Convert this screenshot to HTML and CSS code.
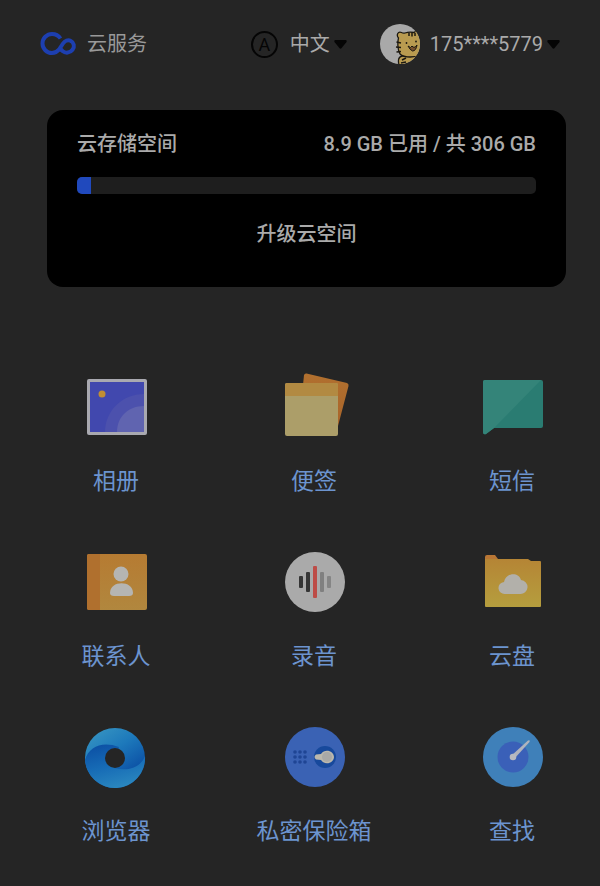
FILE: index.html
```
<!DOCTYPE html>
<html lang="zh-CN">
<head>
    <meta charset="UTF-8">
    <meta name="viewport" content="width=device-width, initial-scale=1.0">
    <title>云服务</title>
    <link rel="stylesheet" href="styles.css">
</head>
<body>
    <header class="header">
        <a href="#" class="brand">
            <svg width="36" height="24" viewBox="0 0 36 24" fill="none" stroke="#1d3fb0" stroke-width="4">
                <path d="M20.500 6.500C18.500 3.500 15.500 2 12 2A9.500 9.500 0 1 0 12 21C15 21 17 20 19 17.500L23 11.500C25 8.500 28 7.500 30.500 8.800C34 10.500 35 14.500 32.500 17.800C30 21.200 25.500 21.500 22.500 19L20 16.500"/>
            </svg>
            <span>云服务</span>
        </a>
        <div class="header-right">
            <button type="button" class="lang-btn">
                <span class="lang-icon">A</span>
                <span class="lang-text">中文</span>
                <svg width="13" height="9" viewBox="0 0 13 9"><path d="M1.500 0H11.500Q13.500 .5 12.300 2.300L7.600 8Q6.500 9.300 5.400 8L.7 2.300Q-.5 .5 1.500 0Z" fill="#050505"/></svg>
            </button>
            <button type="button" class="account-btn">
                <svg width="40" height="40" viewBox="0 0 40 40">
                    <defs><clipPath id="avatarClip"><circle cx="20" cy="20" r="20"/></clipPath></defs>
                    <g clip-path="url(#avatarClip)">
                        <rect width="40" height="40" fill="#a9a9a9"/>
                        <g fill="#b99b50" stroke="#1c1810" stroke-width="1.300" stroke-linejoin="round">
                            <path d="M22 32C18 33 18 37 19 41H37L36 31Z"/>
                            <path d="M18.500 14C16 11 18 7 21.500 8.500C23 9.500 23.500 9.500 25 9C28 8 31 8 34 8.500C36 6 41 7 42 10V30C36 34 24 34 20 30C17.500 26 17.500 18 18.500 14Z"/>
                            <path d="M16.500 18L21 19M16 23L21 23.500M16.500 28L21 27.500M29 9V12M32 8.500V12.500M35 9V12M22 36L26 34M21 39L26 38" fill="none" stroke-width="1.500"/>
                            <path d="M28 22Q31 25 32 22Q34 25 37 21Q36 27 32.500 27Q30 26 28 22Z" fill="#77502d" stroke-width="1"/>
                        </g>
                        <circle cx="26.500" cy="19" r=".9" fill="#1c1810"/>
                        <circle cx="36" cy="17.500" r=".9" fill="#1c1810"/>
                    </g>
                </svg>
                <span class="account-text">175****5779</span>
                <svg width="13" height="9" viewBox="0 0 13 9"><path d="M1.500 0H11.500Q13.500 .5 12.300 2.300L7.600 8Q6.500 9.300 5.400 8L.7 2.300Q-.5 .5 1.500 0Z" fill="#050505"/></svg>
            </button>
        </div>
    </header>

    <main>
        <section class="storage-card">
            <div class="storage-info">
                <span id="storageLabel">云存储空间</span>
                <span>8.9 GB 已用 / 共 306 GB</span>
            </div>
            <div class="storage-bar" role="progressbar" aria-labelledby="storageLabel" aria-valuemin="0" aria-valuemax="306" aria-valuenow="8.9">
                <div class="storage-used" style="width: 3%"></div>
            </div>
            <button type="button" class="upgrade-btn">升级云空间</button>
        </section>

        <nav class="app-grid">
            <a href="#" class="app-item">
                <svg class="app-icon" viewBox="0 0 64 64">
                    <rect x="3" y="4" width="60" height="56" rx="2" fill="#a9a9b0"/>
                    <rect x="6" y="7" width="54" height="50" fill="#4148ae"/>
                    <path d="M21 57C21 36 38 19 60 19V57Z" fill="#4c51ad"/>
                    <path d="M33 57C33 42 44 31 60 31V57Z" fill="#6064b0"/>
                    <circle cx="18" cy="19" r="3.500" fill="#c08e33"/>
                </svg>
                <span>相册</span>
            </a>
            <a href="#" class="app-item">
                <svg class="app-icon" viewBox="0 0 64 64">
                    <defs>
                        <linearGradient id="noteBack" x1="0" y1="0" x2="0" y2="1"><stop offset="0" stop-color="#b1702f"/><stop offset="1" stop-color="#a9652a"/></linearGradient>
                    </defs>
                    <path d="M24.500 -1.500L65 8Q67 9 66.500 11L56 51L18 40L22 0Q23 -2 24.500 -1.500Z" fill="url(#noteBack)"/>
                    <rect x="3" y="8" width="53" height="53" rx="2" fill="#ac9e69"/>
                    <path d="M5 8H54Q56 8 56 10V21H3V10Q3 8 5 8Z" fill="#b28a42"/>
                </svg>
                <span>便签</span>
            </a>
            <a href="#" class="app-item">
                <svg class="app-icon" viewBox="0 0 64 64">
                    <path d="M5 5H61Q63 5 63 7V51Q63 53 61 53H14L6 59Q3 60 3 57V7Q3 5 5 5Z" fill="#2a7c72"/>
                    <path d="M5 5H61L14 53L6 59Q3 60 3 57V7Q3 5 5 5Z" fill="#348479"/>
                </svg>
                <span>短信</span>
            </a>
            <a href="#" class="app-item">
                <svg class="app-icon" viewBox="0 0 64 64">
                    <defs>
                        <linearGradient id="contactBg" x1="0" y1="0" x2="0" y2="1"><stop offset="0" stop-color="#b67b32"/><stop offset="1" stop-color="#b1873e"/></linearGradient>
                    </defs>
                    <rect x="3" y="4" width="60" height="56" rx="2" fill="url(#contactBg)"/>
                    <path d="M5 4H16V60H5Q3 60 3 58V6Q3 4 5 4Z" fill="#b0702e"/>
                    <circle cx="37" cy="24" r="7.500" fill="#b5b5b2"/>
                    <path d="M26 43C26 30 49 30 49 43Q49 46 45 46H30Q26 46 26 43Z" fill="#b5b5b2"/>
                </svg>
                <span>联系人</span>
            </a>
            <a href="#" class="app-item">
                <svg class="app-icon" viewBox="0 0 64 64">
                    <circle cx="33" cy="32" r="30" fill="#aaa"/>
                    <rect x="17" y="26" width="4" height="12" rx="1" fill="#353535"/>
                    <rect x="24" y="22" width="4" height="20" rx="1" fill="#353535"/>
                    <rect x="31" y="16" width="4" height="32" rx="1" fill="#bd4c47"/>
                    <rect x="38" y="22" width="4" height="20" rx="1" fill="#808080"/>
                    <rect x="45" y="26" width="4" height="12" rx="1" fill="#858585"/>
                </svg>
                <span>录音</span>
            </a>
            <a href="#" class="app-item">
                <svg class="app-icon" viewBox="0 0 64 64">
                    <defs>
                        <linearGradient id="folderBg" x1="0" y1="0" x2="0" y2="1"><stop offset="0" stop-color="#b58535"/><stop offset="1" stop-color="#b59e3e"/></linearGradient>
                    </defs>
                    <path d="M7 5H15L18 9H48V20H5V7Q5 5 7 5Z" fill="#b87635"/>
                    <path d="M5 9H48L51 11H60Q61 11 61 12V56Q61 57 60 57H6Q5 57 5 56Z" fill="url(#folderBg)"/>
                    <path d="M25 44A6 6 0 0 1 24 32C26 22 39 22 41 30A7 7 0 0 1 40 44Z" fill="#b2b0aa"/>
                </svg>
                <span>云盘</span>
            </a>
            <a href="#" class="app-item">
                <svg class="app-icon" viewBox="0 0 64 64">
                    <defs>
                        <linearGradient id="ringTop" x1=".15" y1="0" x2=".7" y2=".8"><stop offset="0" stop-color="#3795c2"/><stop offset=".5" stop-color="#1d79bb"/><stop offset="1" stop-color="#0c51a5"/></linearGradient>
                        <linearGradient id="ringBottom" x1=".25" y1="0" x2=".6" y2="1"><stop offset="0" stop-color="#0c51a5"/><stop offset=".5" stop-color="#176cb6"/><stop offset="1" stop-color="#2b88bf"/></linearGradient>
                    </defs>
                    <circle cx="31" cy="33" r="30" fill="url(#ringTop)"/>
                    <path d="M1 35C5 21 19 16 35 22L31 33L30 43C44 47 57 42 61 31A30 30 0 0 1 1 35Z" fill="url(#ringBottom)"/>
                    <circle cx="31" cy="33" r="10" fill="#252525"/>
                </svg>
                <span>浏览器</span>
            </a>
            <a href="#" class="app-item">
                <svg class="app-icon" viewBox="0 0 64 64">
                    <circle cx="33" cy="32" r="30" fill="#3a62b4"/>
                    <circle cx="43" cy="32" r="11" fill="#17499c"/>
                    <path d="M39 29C43 23 52 26 52 32C52 38 43 41 39 35L34 34.500Q31 32 34 29.500Z" fill="#bbb8ad"/>
                    <circle cx="45" cy="32" r="5" fill="#a9a9a7"/>
                    <g fill="#1f4594">
                        <circle cx="13" cy="27" r="1.800"/><circle cx="18" cy="27" r="1.800"/><circle cx="23" cy="27" r="1.800"/>
                        <circle cx="13" cy="32" r="1.800"/><circle cx="18" cy="32" r="1.800"/><circle cx="23" cy="32" r="1.800"/>
                        <circle cx="13" cy="37" r="1.800"/><circle cx="18" cy="37" r="1.800"/><circle cx="23" cy="37" r="1.800"/>
                    </g>
                </svg>
                <span>私密保险箱</span>
            </a>
            <a href="#" class="app-item">
                <svg class="app-icon" viewBox="0 0 64 64">
                    <circle cx="33" cy="32" r="30" fill="#3f80b9"/>
                    <circle cx="33" cy="32" r="15.500" fill="#3a60b8"/>
                    <path d="M31.500 30.500L48 15.500Q50.500 14.500 49.500 17L34.500 33.500Z" fill="#b0b4bd"/>
                    <circle cx="33" cy="32" r="3.300" fill="#b8bac0"/>
                </svg>
                <span>查找</span>
            </a>
        </nav>
    </main>
</body>
</html>
```
FILE: styles.css
```
* {
    margin: 0;
    padding: 0;
    box-sizing: border-box;
}

body {
    font-family: Roboto, "Noto Sans CJK SC", sans-serif;
    min-height: 100vh;
    background: #252525;
    color: #aaa;
    font-size: 20px;
    line-height: 30px;
}

a {
    color: inherit;
    text-decoration: none;
}

button {
    background: none;
    border: none;
    color: inherit;
    font: inherit;
    cursor: pointer;
}

svg {
    display: block;
    flex-shrink: 0;
    overflow: visible;
}

/* 顶部栏 */
.header {
    display: flex;
    align-items: center;
    justify-content: space-between;
    padding: 24px 40px 0;
}

.brand {
    display: flex;
    align-items: center;
    gap: 11px;
    color: #999;
}

.header-right,
.lang-btn,
.account-btn {
    display: flex;
    align-items: center;
}

.header-right {
    gap: 33px;
}

.lang-icon {
    width: 27px;
    height: 27px;
    border: 2px solid #050505;
    border-radius: 50%;
    color: #050505;
    font-size: 18px;
    line-height: 23px;
    text-align: center;
}

.lang-text {
    margin: 0 4px 0 12px;
}

.account-text {
    margin: 0 4px 0 10px;
}

/* 存储空间卡片 */
.storage-card {
    margin: 46px 34px 0 47px;
    padding: 19px 30px 38px;
    background: #000;
    border-radius: 16px;
    font-weight: 500;
}

.storage-info {
    display: flex;
    justify-content: space-between;
}

.storage-bar {
    height: 17px;
    margin: 18px 0 25px;
    background: #1e1e1e;
    border-radius: 5px;
    overflow: hidden;
}

.storage-used {
    height: 100%;
    background: #2049bd;
}

.upgrade-btn {
    display: block;
    margin: 0 auto;
    font-weight: 500;
}

/* 应用列表 */
.app-grid {
    display: grid;
    grid-template-columns: repeat(3, 118px);
    justify-content: space-between;
    row-gap: 51px;
    padding: 88px 29px 36px 57px;
}

.app-item {
    display: flex;
    flex-direction: column;
    align-items: center;
    gap: 26px;
    color: #6c94cf;
    font-size: 23px;
    line-height: 34px;
    white-space: nowrap;
}

.app-icon {
    width: 64px;
    height: 64px;
}
```
